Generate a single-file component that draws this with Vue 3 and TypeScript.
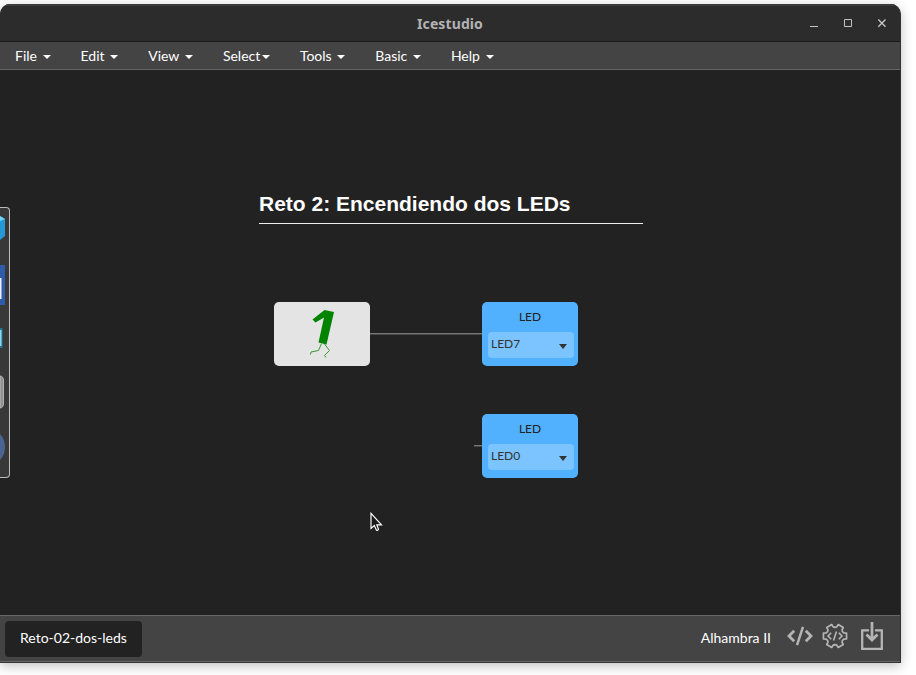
<script setup lang="ts">
interface MenuItem { label: string; tight?: boolean }
interface LedBlock { id: number; pin: string; x: number; y: number }

const menus: MenuItem[] = [
  { label: 'File' },
  { label: 'Edit' },
  { label: 'View' },
  { label: 'Select', tight: true },
  { label: 'Tools' },
  { label: 'Basic' },
  { label: 'Help' },
]
const leds: LedBlock[] = [
  { id: 1, pin: 'LED7', x: 482, y: 232 },
  { id: 2, pin: 'LED0', x: 482, y: 344 },
]

// One tooth of the gear as [angle, radius] pairs, repeated every 60 degrees
const tooth: [number, number][] = [[-19, 9.3], [-14, 11.9], [14, 11.9], [19, 9.3], [30, 8.6]]
const gearPoints: string = [0, 60, 120, 180, 240, 300]
  .flatMap((base) => tooth.map(([angle, r]) => {
    const t = ((base + angle) * Math.PI) / 180
    return `${(13 + r * Math.cos(t)).toFixed(2)},${(13 + r * Math.sin(t)).toFixed(2)}`
  }))
  .join(' ')
</script>

<template>
  <div class="desktop">
    <div class="window">
      <header class="titlebar">
        <span class="side"></span>
        <span class="title">Icestudio</span>
        <span class="side controls">
          <svg width="76" height="12" viewBox="0 0 76 12" fill="none" stroke="#c4c4c4">
            <path d="M0 8.500h8" />
            <path d="M34.500 1.500h7v7h-7z" />
            <path d="M68.300 1.500l7.200 7.200M75.500 1.500l-7.200 7.200" stroke-width="1.400" />
          </svg>
        </span>
      </header>

      <nav class="menubar">
        <a v-for="m in menus" :key="m.label" class="menu" :class="{ tight: m.tight }">
          <span>{{ m.label }}</span><i class="caret"></i>
        </a>
      </nav>

      <main class="canvas">
        <aside class="dock">
          <svg width="9" height="269" viewBox="0 0 9 269">
            <path d="M0 8l5 3v17l-5 4z" fill="#2499d5" />
            <path d="M0 8l5 3-5 2z" fill="#70d4f5" />
            <path d="M0 57h5v40H0z" fill="#2e5caa" />
            <path d="M0 70h1.500v21H0z" fill="#eef1f7" />
            <path d="M0 120h2.500v20H0z" fill="#20768f" />
            <path d="M0 122h1.500v16H0z" fill="#8ad8f0" />
            <path d="M0 168q3.500 0 3.500 5v22q0 5-3.500 5z" fill="#929292" stroke="#c4c4c4" stroke-width=".8" />
            <path d="M0 226q5 5 5 13t-5 13z" fill="#4a6390" />
          </svg>
        </aside>

        <h1 class="heading">Reto 2: Encendiendo dos LEDs</h1>

        <div class="wire wire-long"></div>
        <div class="wire wire-short"></div>

        <div class="constant">
          <svg width="96" height="64" viewBox="0 0 96 64">
            <path d="M38.500 17.500L50.500 8L60 10L52.500 42.500L44.500 40.500L50 15.500L41.500 20.500z" fill="#008400" />
            <path d="M47.500 41.500L44.500 48.500L37 50L36.500 52.500M50.500 42L55.500 48.500L50.500 53.500L52 55.500" fill="none" stroke="#359b35" stroke-width="1" />
          </svg>
        </div>

        <section v-for="led in leds" :key="led.id" class="led" :style="{ left: led.x + 'px', top: led.y + 'px' }">
          <div class="led-label">LED</div>
          <div class="select"><span>{{ led.pin }}</span><i class="arrow"></i></div>
        </section>

        <svg class="pointer" width="14" height="21" viewBox="0 0 14 21">
          <path d="M1 1.300V16.500L4.300 13.500L6.500 18.300Q8 18.700 8.500 17.300L6.800 12.800H11.500z" fill="#1c1c1c" stroke="#fff" stroke-width="1.150" />
        </svg>
      </main>

      <footer class="footer">
        <div class="tab">Reto-02-dos-leds</div>
        <div class="tools">
          <span class="board">Alhambra II</span>
          <svg class="code" width="26" height="20" viewBox="0 0 26 20" fill="none" stroke="#b5b5b5">
            <path d="M7.200 4.800L2 10l5.200 5.200M18.800 4.800l5.200 5.200-5.200 5.200" stroke-width="2.800" />
            <path d="M16 .8L10 19.200" stroke-width="2.500" />
          </svg>
          <svg class="gear" width="26" height="26" viewBox="0 0 26 26" fill="none" stroke="#b5b5b5">
            <polygon :points="gearPoints" stroke-width="1.700" stroke-linejoin="round" />
            <path d="M9.200 9.800l-3.200 3.200 3.200 3.200M16.800 9.800l3.200 3.200-3.200 3.200M14.500 8.500L11.500 17.500" stroke-width="1.600" />
          </svg>
          <svg class="download" width="22" height="28" viewBox="0 0 22 28" fill="none" stroke="#b5b5b5">
            <path d="M8 8.300H1.200V26.800H20.800V8.300H14" stroke-width="2.300" />
            <path d="M11 0V17M5.500 12.500L11 18L16.500 12.500" stroke-width="2.700" />
          </svg>
        </div>
      </footer>
    </div>
  </div>
</template>

<style>
body { margin: 0; background: #fff; }
</style>

<style scoped>
* { box-sizing: border-box; }
.desktop {
  width: 916px;
  height: 675px;
  padding-top: 4px;
  overflow: hidden;
  background: #fff;
  font-family: Lato, sans-serif;
}
.window {
  width: 901px;
  height: 659px;
  display: flex;
  flex-direction: column;
  overflow: hidden;
  border-radius: 10px 10px 0 0;
  border-right: 1px solid #333;
  border-bottom: 1px solid #333;
  background: #444;
  box-shadow: 0 3px 12px rgba(0, 0, 0, 0.25);
}
.titlebar {
  height: 38px;
  flex: none;
  display: flex;
  align-items: center;
  padding-left: 14px;
  border-top: 2px solid #3b3b3b;
  border-bottom: 1px solid #191919;
  background: #2c2c2c;
}
.side { flex: 1; display: flex; }
.title {
  font: bold 14px/20px "Noto Sans", sans-serif;
  letter-spacing: 0.1px;
  color: #b3b3b3;
}
.controls { justify-content: flex-end; padding-right: 14px; }
.menubar {
  height: 28px;
  flex: none;
  display: flex;
  border-bottom: 1px solid #666;
  background: #444;
}
.menu {
  display: flex;
  align-items: center;
  gap: 5.600px;
  padding: 0 15px;
  color: #fff;
  font-size: 14px;
  line-height: 20px;
}
.menu.tight { gap: 1.600px; }
.caret {
  margin-top: 2px;
  border: 4px solid transparent;
  border-top-color: #fff;
  border-bottom: 0;
}
.canvas { position: relative; height: 545px; flex: none; background: #222; }
.dock {
  position: absolute;
  left: 0;
  top: 137px;
  width: 10px;
  height: 271px;
  overflow: hidden;
  border: 1px solid #bbb;
  border-left: 0;
  border-radius: 0 4px 4px 0;
  background: #383838;
}
.dock svg { display: block; }
.heading {
  position: absolute;
  left: 259px;
  top: 120px;
  width: 384px;
  height: 34px;
  margin: 0;
  border-bottom: 1px solid #eee;
  color: #fff;
  font: bold 21px/28px "Liberation Sans", sans-serif;
}
.wire {
  position: absolute;
  height: 2px;
  background: #484848;
  border-top: 1px solid #777;
}
.wire-long { left: 370px; top: 263px; width: 112px; }
.wire-short { left: 474px; top: 375px; width: 8px; }
.constant {
  position: absolute;
  left: 274px;
  top: 232px;
  width: 96px;
  height: 64px;
  border-radius: 5px;
  background: #e4e4e4;
}
.constant svg { display: block; }
.led {
  position: absolute;
  width: 96px;
  height: 64px;
  padding: 6px 4px 8px 6px;
  border-radius: 5px;
  background: #51b1ff;
  color: #222;
  font-size: 12px;
}
.led-label { height: 24px; padding-right: 2px; line-height: 18px; text-align: center; }
.select {
  height: 26px;
  display: flex;
  justify-content: space-between;
  align-items: flex-start;
  padding: 3px 7px 0 3px;
  border-radius: 4px;
  background: #7bc4ff;
  color: #333;
  line-height: 18px;
}
.arrow {
  margin-top: 9px;
  border: 4px solid transparent;
  border-top: 5px solid #333;
  border-bottom: 0;
}
.pointer { position: absolute; left: 370px; top: 442px; }
.footer {
  height: 47px;
  flex: none;
  display: flex;
  justify-content: space-between;
  align-items: flex-start;
  padding: 5px 18px 0 5px;
  border-top: 1px solid #666;
  border-bottom: 1px solid #666;
  background: #444;
  color: #fff;
  font-size: 14px;
}
.tab {
  height: 36px;
  padding: 0 15px;
  border-radius: 4px;
  background: #222;
  line-height: 33px;
}
.tools { display: flex; align-items: flex-start; }
.board { margin-right: 16px; line-height: 33px; }
.code { margin: 5px 9px 0 0; }
.gear { margin: 2px 13px 0 0; }
.download { margin: 1px -1px 0 0; }
</style>
